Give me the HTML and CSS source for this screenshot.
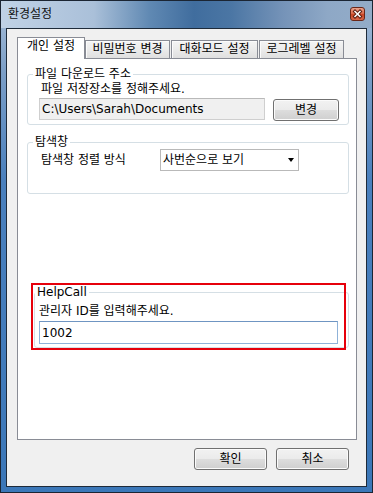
FILE: index.html
```html
<!DOCTYPE html>
<html lang="ko">
<head>
    <meta charset="UTF-8">
    <meta name="viewport" content="width=device-width, initial-scale=1.0">
    <title>환경설정</title>
    <link rel="stylesheet" href="styles.css">
</head>
<body>
    <div class="window">
        <div class="titlebar">
            <span class="title">환경설정</span>
            <span class="close">
                <svg width="13" height="12" viewBox="0 0 13 12">
                    <path d="M4 3.5 L9 8.5 M9 3.5 L4 8.5" stroke="#5c1d10" stroke-width="3.4" stroke-linecap="square"/>
                    <path d="M4 3.5 L9 8.5 M9 3.5 L4 8.5" stroke="#ffffff" stroke-width="1.5" stroke-linecap="square"/>
                </svg>
            </span>
        </div>
        <div class="frame">
            <div class="client">
                <div class="tabs">
                    <div class="tab active">개인 설정</div>
                    <div class="tab">비밀번호 변경</div>
                    <div class="tab">대화모드 설정</div>
                    <div class="tab">로그레벨 설정</div>
                </div>
                <div class="panel">
                    <fieldset class="group">
                        <legend>파일 다운로드 주소</legend>
                        <div class="group-body download">
                            <p class="hint">파일 저장장소를 정해주세요.</p>
                            <div class="path-row">
                                <input class="path" type="text" value="C:\Users\Sarah\Documents" readonly>
                                <button class="btn btn-change">변경</button>
                            </div>
                        </div>
                    </fieldset>

                    <fieldset class="group group-explorer">
                        <legend>탐색창</legend>
                        <div class="group-body explorer">
                            <span class="sort-label">탐색창 정렬 방식</span>
                            <div class="combo">
                                <span>사번순으로 보기</span>
                                <span class="arrow"></span>
                            </div>
                        </div>
                    </fieldset>

                    <div class="callout">
                        <fieldset class="group group-help">
                            <legend>HelpCall</legend>
                            <div class="group-body help">
                                <p class="hint">관리자 ID를 입력해주세요.</p>
                                <input class="admin-id" type="text" value="1002">
                            </div>
                        </fieldset>
                    </div>
                </div>
                <div class="actions">
                    <button class="btn btn-action">확인</button>
                    <button class="btn btn-action">취소</button>
                </div>
            </div>
        </div>
    </div>
</body>
</html>
```

FILE: styles.css
```css
body {
    margin: 0;
    font-family: "DejaVu Sans", "Noto Sans CJK KR", sans-serif;
    font-size: 12px;
    color: #000;
    background: #fff;
}
.window {
    width: 373px;
    height: 493px;
    box-sizing: border-box;
    border: 1px solid #1b2533;
    display: flex;
    flex-direction: column;
    background: linear-gradient(180deg, #a9bfd9 0, #7c9fc7 70px, #4a80bd 180px, #3b77b8 100%);
}
.titlebar {
    height: 27px;
    flex-shrink: 0;
    display: flex;
    align-items: flex-start;
    padding: 0 7px;
    background: linear-gradient(90deg, #c0d2e6 0%, #aac0d9 25%, #6089b3 40%, #406d9e 52%, #4b76a4 62%, #7593b8 76%, #8ea8c6 88%, #93acc8 100%);
}
.title {
    line-height: 27px;
    color: #111;
}
.close {
    margin-left: auto;
    margin-top: 6px;
    width: 13px;
    height: 12px;
    border: 1px solid #6a2718;
    border-radius: 3px;
    background: linear-gradient(180deg, #eba38d 0%, #dc6c4c 45%, #c84423 55%, #d8694c 100%);
    display: flex;
}
.frame {
    flex: 1;
    padding: 0 5px 5px;
    display: flex;
}
.client {
    flex: 1;
    border: 1px solid #1e2b3a;
    background: #f0f0f0;
    display: flex;
    flex-direction: column;
}

/* tabs */
.tabs {
    display: flex;
    align-items: flex-end;
    margin: 8px 0 0 10px;
    height: 21px;
}
.tab {
    box-sizing: border-box;
    height: 18px;
    line-height: 16px;
    text-align: center;
    border: 1px solid #898c95;
    border-bottom: none;
    background: linear-gradient(180deg, #f4f4f4 0%, #ebebeb 50%, #dfdfdf 100%);
    box-shadow: inset 1px 1px 0 #fbfbfb;
    position: relative;
}
.tab:nth-child(1) { width: 68px; }
.tab:nth-child(2) { width: 85px; }
.tab:nth-child(3) { width: 87px; margin-left: 1px; }
.tab:nth-child(4) { width: 85px; margin-left: 1px; }
.tab.active {
    height: 22px;
    margin-bottom: -1px;
    padding-top: 1px;
    line-height: 14px;
    background: #fff;
    box-shadow: none;
    z-index: 1;
}
.panel {
    box-sizing: border-box;
    width: 340px;
    height: 382px;
    margin-left: 10px;
    border: 1px solid #898c95;
    background: #fff;
    padding: 8px 7px 0 9px;
}

/* group boxes */
.group {
    margin: 0;
    padding: 0;
    min-width: 0;
    border: 1px solid #d5dfe5;
    border-radius: 3px;
}
.group legend {
    margin-left: 5px;
    padding: 0 2px;
    line-height: 14px;
}
.group-body {
    padding: 1px 9px 3px 11px;
}
.hint {
    margin: 0 0 2px 2px;
    line-height: 14px;
}
.path-row {
    display: flex;
    align-items: flex-start;
    gap: 8px;
}
.path {
    flex: 1;
    min-width: 0;
    box-sizing: border-box;
    height: 22px;
    margin: 0;
    padding: 0 2px;
    border: 1px solid #cfcfcf;
    border-top-color: #b9b9b9;
    background: #f0f0f0;
    font: inherit;
    color: #000;
    outline: none;
}
.btn {
    box-sizing: border-box;
    height: 22px;
    padding: 0;
    border: 1px solid #707070;
    border-radius: 3px;
    background: linear-gradient(180deg, #f2f2f2 0%, #ebebeb 48%, #dddddd 52%, #cfcfcf 100%);
    box-shadow: inset 0 0 0 1px #fbfbfb;
    font: inherit;
    color: #000;
    line-height: 18px;
}
.btn-change {
    width: 66px;
    margin-top: 1px;
}

.group-explorer {
    margin-top: 10px;
}
.explorer {
    display: flex;
    align-items: center;
    padding-top: 0;
    padding-bottom: 22px;
}
.sort-label {
    width: 119px;
    margin-left: 2px;
    line-height: 14px;
}
.combo {
    box-sizing: border-box;
    width: 139px;
    height: 22px;
    border: 1px solid #b9b9b9;
    background: #fff;
    display: flex;
    align-items: center;
    padding: 0 4px 0 2px;
    line-height: 14px;
}
.arrow {
    margin-left: auto;
    width: 0;
    height: 0;
    border-left: 3.5px solid transparent;
    border-right: 3.5px solid transparent;
    border-top: 4px solid #000;
}

/* HelpCall box, outlined in red */
.callout {
    position: relative;
    margin: 91px 0 0 7px;
}
.callout::after {
    content: "";
    position: absolute;
    top: -2px;
    right: 3px;
    bottom: -2px;
    left: -3px;
    border: 2px solid #e6000b;
}
.group-help legend {
    margin-left: 0;
}
.help {
    padding: 5px 10px 3px 4px;
}
.help .hint {
    margin: 0 0 3px 0;
}
.admin-id {
    display: block;
    box-sizing: border-box;
    width: 100%;
    height: 23px;
    margin: 0;
    padding: 0 2px;
    border: 1px solid #8fb2d8;
    border-top-color: #6f95c2;
    font: inherit;
    color: #000;
    outline: none;
}

.actions {
    display: flex;
    justify-content: flex-end;
    gap: 9px;
    margin-top: 8px;
    padding-right: 17px;
}
.btn-action {
    width: 73px;
}
```
